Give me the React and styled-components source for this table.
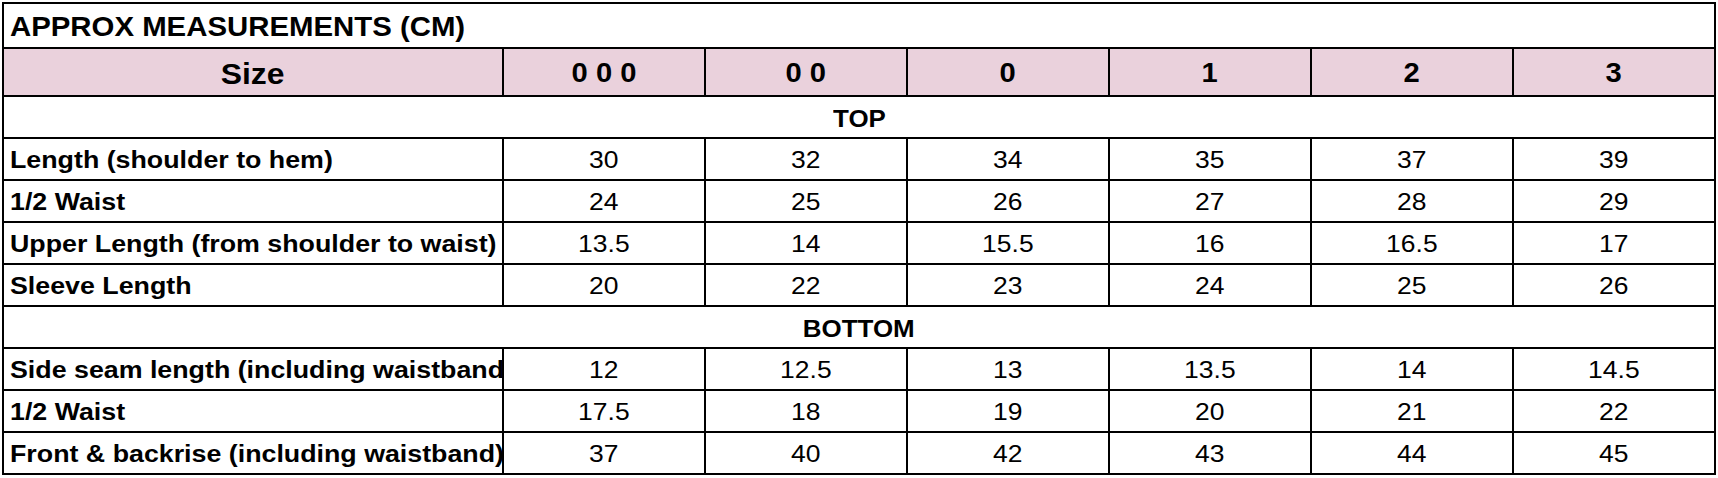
import React from 'react'
import styled, { createGlobalStyle } from 'styled-components'

const GlobalStyle = createGlobalStyle`
  html, body {
    margin: 0;
    padding: 0;
    background: #ffffff;
  }
  body {
    font-family: "Liberation Sans", Arial, sans-serif;
    color: #000000;
  }
`

const sizes = ['0 0 0', '0 0', '0', '1', '2', '3']

const sections = [
  {
    title: 'TOP',
    rows: [
      ['Length (shoulder to hem)', [30, 32, 34, 35, 37, 39]],
      ['1/2 Waist', [24, 25, 26, 27, 28, 29]],
      ['Upper Length (from shoulder to waist)', [13.5, 14, 15.5, 16, 16.5, 17]],
      ['Sleeve Length', [20, 22, 23, 24, 25, 26]],
    ],
  },
  {
    title: 'BOTTOM',
    rows: [
      ['Side seam length (including waistband', [12, 12.5, 13, 13.5, 14, 14.5]],
      ['1/2 Waist', [17.5, 18, 19, 20, 21, 22]],
      ['Front & backrise (including waistband)', [37, 40, 42, 43, 44, 45]],
    ],
  },
]

const Page = styled.div`
  width: 1718px;
  height: 478px;
  padding: 2px 0 0 2px;
  box-sizing: border-box;
  overflow: hidden;
`

const Sheet = styled.div`
  display: grid;
  grid-template-columns: 500px repeat(6, 202px);
  grid-template-rows: 45px 48px repeat(9, 42px);
  width: 1714px;
  box-sizing: border-box;
  border-top: 2px solid #000;
  border-left: 2px solid #000;
`

const Cell = styled.div`
  box-sizing: border-box;
  display: flex;
  align-items: center;
  justify-content: ${p => (p.$left ? 'flex-start' : 'center')};
  padding: ${p => (p.$left ? '3px 0 0 6px' : '3px 0 0 0')};
  border-right: 2px solid #000;
  border-bottom: 2px solid #000;
  background: ${p => (p.$pink ? '#ead1dc' : '#ffffff')};
  grid-column: ${p => (p.$span ? '1 / -1' : 'auto')};
  overflow: hidden;
  white-space: nowrap;
`

const Text = styled.span`
  display: inline-block;
  font-size: ${p => p.$size}px;
  font-weight: ${p => (p.$bold ? 700 : 400)};
  line-height: 1;
  white-space: pre;
  transform: scaleX(1.08);
  transform-origin: ${p => (p.$left ? 'left center' : 'center center')};
`

export default function App() {
  return (
    <Page>
      <GlobalStyle />
      <Sheet>
        <Cell $span $left>
          <Text $size={27.2} $bold $left>APPROX MEASUREMENTS (CM)</Text>
        </Cell>

        <Cell $pink>
          <Text $size={29.5} $bold>Size</Text>
        </Cell>
        {sizes.map(s => (
          <Cell $pink key={s}>
            <Text $size={27} $bold>{s}</Text>
          </Cell>
        ))}

        {sections.map(section => (
          <React.Fragment key={section.title}>
            <Cell $span>
              <Text $size={24} $bold>{section.title}</Text>
            </Cell>
            {section.rows.map(([label, values]) => (
              <React.Fragment key={section.title + label}>
                <Cell $left>
                  <Text $size={24.8} $bold $left>{label}</Text>
                </Cell>
                {values.map((v, i) => (
                  <Cell key={i}>
                    <Text $size={24.5}>{v}</Text>
                  </Cell>
                ))}
              </React.Fragment>
            ))}
          </React.Fragment>
        ))}
      </Sheet>
    </Page>
  )
}
